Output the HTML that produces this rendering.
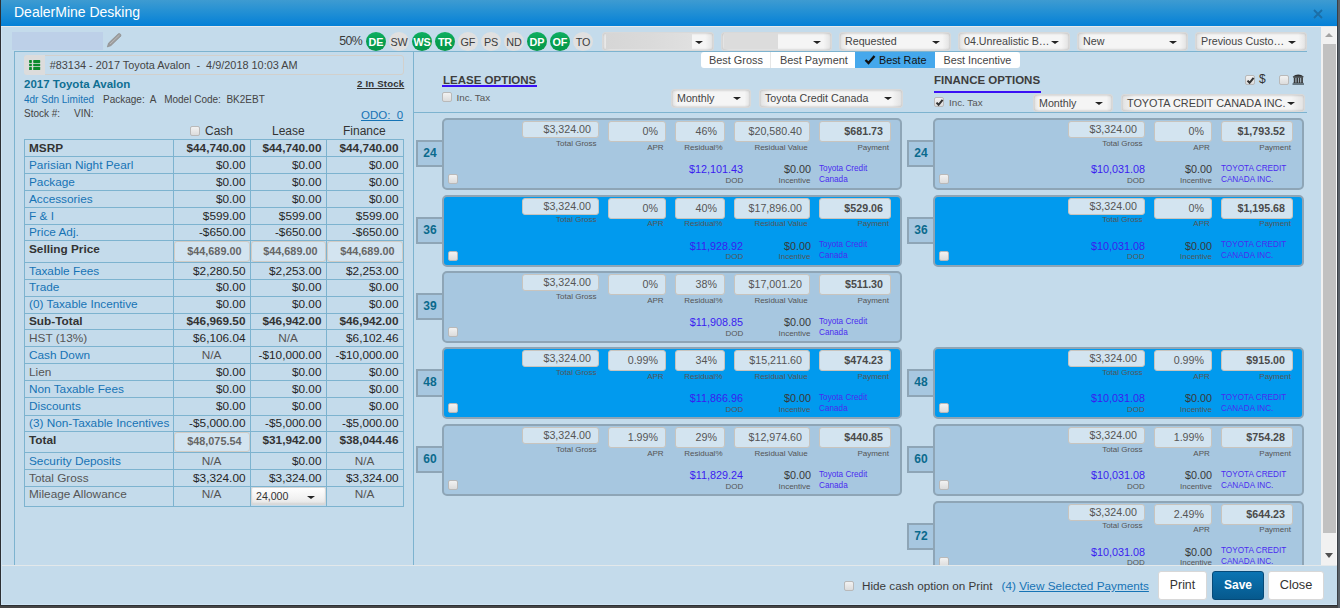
<!DOCTYPE html><html><head><meta charset="utf-8"><style>
*{box-sizing:border-box;margin:0;padding:0}
html,body{width:1340px;height:608px;overflow:hidden}
body{position:relative;background:#464646;font-family:"Liberation Sans",sans-serif;color:#333}
.a{position:absolute;white-space:pre}
.win{position:absolute;left:1px;top:0;width:1336px;height:605px;background:#c4dbeb;overflow:hidden}
.hdr{position:absolute;left:1px;top:0;width:1336px;height:26px;background:linear-gradient(#3e9bd1,#2390d4 45%,#0480d7)}
.hline{position:absolute;left:1px;top:26px;width:1336px;height:1px;background:#e6e9eb}
.ln{position:absolute;background:#7db3cf}
.circ{position:absolute;top:32px;width:20px;height:19px;border-radius:50%;font-size:10.8px;text-align:center;line-height:20.3px;letter-spacing:-0.2px;text-indent:-0.2px}
.cg{background:linear-gradient(#0fb063,#07a050 45%,#06984a);color:#fff;font-weight:bold}
.cy{background:#e0e0e0;color:#3c3c3c}
.sel{position:absolute;height:18.5px;border:1px solid #d9d9d9;border-radius:3px;background:linear-gradient(90deg,#e2e2e2,#f5f5f5 7%,#f5f5f5 93%,#e2e2e2);box-shadow:inset 0 1px 2px rgba(0,0,0,0.12),inset 0 -1px 2px rgba(0,0,0,0.1);font-size:10.7px;color:#444;line-height:16px;padding-left:5px;overflow:hidden}
.car{position:absolute;width:0;height:0;border-left:4px solid transparent;border-right:4px solid transparent;border-top:3.5px solid #222}
.cb{position:absolute;width:10px;height:10px;border:1px solid #b9b9b9;border-radius:2px;background:linear-gradient(#f2f2f2,#dcdcdc)}
.card{position:absolute;border:2px solid #8ea5b6;border-radius:5px;background:#a7c7e0;height:72px}
.card.on{background:#019aee}
.term{position:absolute;border:2px solid #8ea5b6;background:#a7c7e0;color:#0b6a8d;font-weight:bold;font-size:12px;text-align:center;line-height:23.4px}
.inp{position:absolute;background:#d3e4f0;border:1px solid #c8c4be;border-radius:3px;color:#555;font-size:10.7px;text-align:right;padding-right:7px}
.lbl{position:absolute;font-size:8px;color:#555;text-align:right;white-space:pre}
.dod{position:absolute;font-size:10.8px;color:#3a1cf0;text-align:right;white-space:pre}
.inc{position:absolute;font-size:10.8px;color:#383838;text-align:right;white-space:pre}
.lend{position:absolute;font-size:8.2px;color:#4a2cf0;white-space:pre;line-height:11px}
.tc{position:absolute;font-size:11.8px;white-space:pre}
.lk{color:#1673b5}
</style></head><body>
<div class="a" style="left:0;top:0;width:1px;height:606px;background:#2c2f33"></div><div class="a" style="left:0;top:605px;width:1338px;height:1px;background:#2d3033"></div><div class="a" style="left:1337px;top:0;width:1px;height:606px;background:#3a3f45"></div><div class="a" style="left:1338px;top:0;width:2px;height:608px;background:#5a6169"></div>
<div class="win"></div>
<div class="hdr"></div><div class="hline"></div>
<div class="a" style="left:14px;top:3px;font-size:14px;color:#fff;line-height:18px">DealerMine Desking</div>
<svg class="a" style="left:1312.2px;top:7.6px" width="12" height="12"><path d="M2 2L10 10M10 2L2 10" stroke="#1c6ea6" stroke-width="1.8"/></svg>
<div class="a" style="left:12px;top:32px;width:91px;height:18px;background:#bdd0e8"></div>
<svg class="a" style="left:104px;top:32px" width="18" height="18"><path d="M3.3 15 L4.5 11.1 L14.3 1.7 Q15.9 1.2 16.7 2.4 Q17.2 3.5 16.7 4.3 L6.9 13.7 Z" fill="#9c9c9c" stroke="#8a8a8a" stroke-width="0.6"/><path d="M6 12 L15.5 3" stroke="#bdbdbd" stroke-width="0.9"/></svg>
<div class="ln" style="left:14px;top:51px;width:1293px;height:1px"></div>
<div class="ln" style="left:14px;top:51px;width:1px;height:514px"></div>
<div class="ln" style="left:413px;top:51px;width:1px;height:514px"></div>
<div class="ln" style="left:414px;top:112px;width:893px;height:1px"></div>
<div class="a" style="left:339.3px;top:33.7px;font-size:12.3px;letter-spacing:-0.6px;color:#3a3a3a;line-height:14px">50%</div>
<div class="circ cg" style="left:366px">DE</div>
<div class="circ cy" style="left:389px">SW</div>
<div class="circ cg" style="left:412px">WS</div>
<div class="circ cg" style="left:435px">TR</div>
<div class="circ cy" style="left:458px">GF</div>
<div class="circ cy" style="left:481px">PS</div>
<div class="circ cy" style="left:504px">ND</div>
<div class="circ cg" style="left:527px">DP</div>
<div class="circ cg" style="left:550px">OF</div>
<div class="circ cy" style="left:573px">TO</div>
<div class="sel" style="left:602px;top:32px;width:112px"></div>
<div class="car" style="left:695px;top:40.5px"></div>
<div class="sel" style="left:721px;top:32px;width:111px"></div>
<div class="car" style="left:813px;top:40.5px"></div>
<div class="sel" style="left:839px;top:32px;width:112px">Requested</div>
<div class="car" style="left:932px;top:40.5px"></div>
<div class="sel" style="left:958px;top:32px;width:112px">04.Unrealistic B…</div>
<div class="car" style="left:1051px;top:40.5px"></div>
<div class="sel" style="left:1077px;top:32px;width:111px">New</div>
<div class="car" style="left:1169px;top:40.5px"></div>
<div class="sel" style="left:1195px;top:32px;width:112px">Previous Custo…</div>
<div class="car" style="left:1288px;top:40.5px"></div>
<div class="a" style="left:606px;top:33px;width:86px;height:16px;background:linear-gradient(90deg,#d6d6d6,#dadada 50%,#e0e0e0)"></div>
<div class="a" style="left:724px;top:33px;width:54px;height:16px;background:#dcdcdc"></div>
<div class="a" style="left:701px;top:52px;width:319px;height:16px;background:#fff;border-radius:3px"></div>
<div class="a" style="left:770px;top:52px;width:1px;height:16px;background:#e6e6e6"></div>
<div class="a" style="left:855px;top:52px;width:80px;height:16px;background:#45a8ec"></div>
<div class="a" style="left:709px;top:53px;font-size:10.9px;color:#444;line-height:14px">Best Gross</div>
<div class="a" style="left:780px;top:53px;font-size:10.9px;color:#444;line-height:14px">Best Payment</div>
<svg class="a" style="left:864px;top:54px" width="12" height="11"><path d="M1.5 6L4.5 9L10.5 2" stroke="#111" stroke-width="2.4" fill="none"/></svg>
<div class="a" style="left:879px;top:53px;font-size:10.8px;color:#111;line-height:14px">Best Rate</div>
<div class="a" style="left:943.5px;top:53px;font-size:10.8px;color:#444;line-height:14px">Best Incentive</div>
<div class="a" style="left:443px;top:72.7px;font-size:11.5px;font-weight:bold;color:#3d3d3d;letter-spacing:0px;line-height:14px">LEASE OPTIONS</div>
<div class="a" style="left:442px;top:85.3px;width:95px;height:1.4px;background:#3a10f5"></div>
<div class="cb" style="left:442px;top:92px"></div>
<div class="a" style="left:456.5px;top:92.3px;font-size:9.8px;color:#555;line-height:11px">Inc. Tax</div>
<div class="sel" style="left:671px;top:89px;width:80px">Monthly</div><div class="car" style="left:733px;top:97px"></div>
<div class="sel" style="left:759px;top:89px;width:144px;font-size:10.7px">Toyota Credit Canada</div><div class="car" style="left:884px;top:97px"></div>
<div class="a" style="left:934px;top:72.5px;font-size:11.5px;font-weight:bold;color:#3d3d3d;letter-spacing:0px;line-height:14px">FINANCE OPTIONS</div>
<div class="a" style="left:934px;top:91.3px;width:107px;height:1.4px;background:#3a10f5"></div>
<div class="cb" style="left:934px;top:97px"></div>
<svg class="a" style="left:935px;top:98px" width="9" height="9"><path d="M1.5 4.6L3.6 6.8L7.6 1.8" stroke="#333" stroke-width="2" fill="none"/></svg>
<div class="a" style="left:949px;top:97.3px;font-size:9.8px;color:#555;line-height:11px">Inc. Tax</div>
<div class="sel" style="left:1033px;top:93.5px;width:80px">Monthly</div><div class="car" style="left:1095px;top:101.5px"></div>
<div class="sel" style="left:1121px;top:93.5px;width:184px;font-size:10.85px">TOYOTA CREDIT CANADA INC.</div><div class="car" style="left:1287px;top:101.5px"></div>
<div class="cb" style="left:1245px;top:75px"></div>
<svg class="a" style="left:1246px;top:76px" width="9" height="9"><path d="M1.5 4.6L3.6 6.8L7.6 1.8" stroke="#333" stroke-width="2" fill="none"/></svg>
<div class="a" style="left:1259px;top:72px;font-size:12px;color:#333;line-height:14px">$</div>
<div class="cb" style="left:1279px;top:75px"></div>
<svg class="a" style="left:1292px;top:73px" width="13" height="13"><path d="M0.5 3.8 Q6.2 -0.6 12 3.8 Z" fill="#2f2f2f"/><rect x="1.2" y="3.6" width="10" height="1.1" fill="#333"/><rect x="1.8" y="4.6" width="1.7" height="5.4" fill="#3a3a3a"/><rect x="4.4" y="4.6" width="1.6" height="5.4" fill="#3a3a3a"/><rect x="6.7" y="4.6" width="1.6" height="5.4" fill="#3a3a3a"/><rect x="9.2" y="4.6" width="1.7" height="5.4" fill="#3a3a3a"/><rect x="1.2" y="9.6" width="10" height="0.8" fill="#333"/><rect x="0.5" y="10.2" width="11.5" height="1.7" fill="#5c6b75"/></svg>
<div class="card" style="left:442px;top:118px;width:460px"></div>
<div class="term" style="left:416px;top:140px;width:28px;height:27.4px">24</div>
<div class="cb" style="left:448px;top:174px"></div>
<div class="inp" style="left:522px;top:121px;width:77px;height:17px;line-height:15px;">$3,324.00</div>
<div class="lbl" style="right:743.5px;top:138.6px;line-height:9px">Total Gross</div>
<div class="inp" style="left:608px;top:121px;width:58px;height:21px;line-height:19px;">0%</div>
<div class="lbl" style="right:676.4px;top:142.6px;line-height:9px">APR</div>
<div class="inp" style="left:675px;top:121px;width:50px;height:21px;line-height:19px;">46%</div>
<div class="lbl" style="right:617.5px;top:142.6px;line-height:9px">Residual%</div>
<div class="inp" style="left:734px;top:121px;width:76px;height:21px;line-height:19px;">$20,580.40</div>
<div class="lbl" style="right:532.4px;top:142.6px;line-height:9px">Residual Value</div>
<div class="inp" style="left:819px;top:121px;width:72px;height:21px;line-height:19px;font-weight:bold;color:#4a4a4a;">$681.73</div>
<div class="lbl" style="right:451px;top:142.6px;line-height:9px">Payment</div>
<div class="dod" style="right:597px;top:163px;line-height:12px">$12,101.43</div>
<div class="lbl" style="right:596.8px;top:175.6px;line-height:9px">DOD</div>
<div class="inc" style="right:529px;top:163px;line-height:12px">$0.00</div>
<div class="lbl" style="right:529.5px;top:175.6px;line-height:9px">Incentive</div>
<div class="lend" style="left:819px;top:162.6px">Toyota Credit<br>Canada</div>
<div class="card on" style="left:442px;top:194.5px;width:460px"></div>
<div class="term" style="left:416px;top:216.5px;width:28px;height:27.4px">36</div>
<div class="cb" style="left:448px;top:250.5px"></div>
<div class="inp" style="left:522px;top:197.5px;width:77px;height:17px;line-height:15px;">$3,324.00</div>
<div class="lbl" style="right:743.5px;top:215.1px;line-height:9px">Total Gross</div>
<div class="inp" style="left:608px;top:197.5px;width:58px;height:21px;line-height:19px;">0%</div>
<div class="lbl" style="right:676.4px;top:219.1px;line-height:9px">APR</div>
<div class="inp" style="left:675px;top:197.5px;width:50px;height:21px;line-height:19px;">40%</div>
<div class="lbl" style="right:617.5px;top:219.1px;line-height:9px">Residual%</div>
<div class="inp" style="left:734px;top:197.5px;width:76px;height:21px;line-height:19px;">$17,896.00</div>
<div class="lbl" style="right:532.4px;top:219.1px;line-height:9px">Residual Value</div>
<div class="inp" style="left:819px;top:197.5px;width:72px;height:21px;line-height:19px;font-weight:bold;color:#4a4a4a;">$529.06</div>
<div class="lbl" style="right:451px;top:219.1px;line-height:9px">Payment</div>
<div class="dod" style="right:597px;top:239.5px;line-height:12px">$11,928.92</div>
<div class="lbl" style="right:596.8px;top:252.1px;line-height:9px">DOD</div>
<div class="inc" style="right:529px;top:239.5px;line-height:12px">$0.00</div>
<div class="lbl" style="right:529.5px;top:252.1px;line-height:9px">Incentive</div>
<div class="lend" style="left:819px;top:239.1px">Toyota Credit<br>Canada</div>
<div class="card" style="left:442px;top:271px;width:460px"></div>
<div class="term" style="left:416px;top:293px;width:28px;height:27.4px">39</div>
<div class="cb" style="left:448px;top:327px"></div>
<div class="inp" style="left:522px;top:274px;width:77px;height:17px;line-height:15px;">$3,324.00</div>
<div class="lbl" style="right:743.5px;top:291.6px;line-height:9px">Total Gross</div>
<div class="inp" style="left:608px;top:274px;width:58px;height:21px;line-height:19px;">0%</div>
<div class="lbl" style="right:676.4px;top:295.6px;line-height:9px">APR</div>
<div class="inp" style="left:675px;top:274px;width:50px;height:21px;line-height:19px;">38%</div>
<div class="lbl" style="right:617.5px;top:295.6px;line-height:9px">Residual%</div>
<div class="inp" style="left:734px;top:274px;width:76px;height:21px;line-height:19px;">$17,001.20</div>
<div class="lbl" style="right:532.4px;top:295.6px;line-height:9px">Residual Value</div>
<div class="inp" style="left:819px;top:274px;width:72px;height:21px;line-height:19px;font-weight:bold;color:#4a4a4a;">$511.30</div>
<div class="lbl" style="right:451px;top:295.6px;line-height:9px">Payment</div>
<div class="dod" style="right:597px;top:316px;line-height:12px">$11,908.85</div>
<div class="lbl" style="right:596.8px;top:328.6px;line-height:9px">DOD</div>
<div class="inc" style="right:529px;top:316px;line-height:12px">$0.00</div>
<div class="lbl" style="right:529.5px;top:328.6px;line-height:9px">Incentive</div>
<div class="lend" style="left:819px;top:315.6px">Toyota Credit<br>Canada</div>
<div class="card on" style="left:442px;top:347.4px;width:460px"></div>
<div class="term" style="left:416px;top:369.4px;width:28px;height:27.4px">48</div>
<div class="cb" style="left:448px;top:403.4px"></div>
<div class="inp" style="left:522px;top:350.4px;width:77px;height:17px;line-height:15px;">$3,324.00</div>
<div class="lbl" style="right:743.5px;top:368.0px;line-height:9px">Total Gross</div>
<div class="inp" style="left:608px;top:350.4px;width:58px;height:21px;line-height:19px;">0.99%</div>
<div class="lbl" style="right:676.4px;top:372.0px;line-height:9px">APR</div>
<div class="inp" style="left:675px;top:350.4px;width:50px;height:21px;line-height:19px;">34%</div>
<div class="lbl" style="right:617.5px;top:372.0px;line-height:9px">Residual%</div>
<div class="inp" style="left:734px;top:350.4px;width:76px;height:21px;line-height:19px;">$15,211.60</div>
<div class="lbl" style="right:532.4px;top:372.0px;line-height:9px">Residual Value</div>
<div class="inp" style="left:819px;top:350.4px;width:72px;height:21px;line-height:19px;font-weight:bold;color:#4a4a4a;">$474.23</div>
<div class="lbl" style="right:451px;top:372.0px;line-height:9px">Payment</div>
<div class="dod" style="right:597px;top:392.4px;line-height:12px">$11,866.96</div>
<div class="lbl" style="right:596.8px;top:405.0px;line-height:9px">DOD</div>
<div class="inc" style="right:529px;top:392.4px;line-height:12px">$0.00</div>
<div class="lbl" style="right:529.5px;top:405.0px;line-height:9px">Incentive</div>
<div class="lend" style="left:819px;top:392.0px">Toyota Credit<br>Canada</div>
<div class="card" style="left:442px;top:424px;width:460px"></div>
<div class="term" style="left:416px;top:446px;width:28px;height:27.4px">60</div>
<div class="cb" style="left:448px;top:480px"></div>
<div class="inp" style="left:522px;top:427px;width:77px;height:17px;line-height:15px;">$3,324.00</div>
<div class="lbl" style="right:743.5px;top:444.6px;line-height:9px">Total Gross</div>
<div class="inp" style="left:608px;top:427px;width:58px;height:21px;line-height:19px;">1.99%</div>
<div class="lbl" style="right:676.4px;top:448.6px;line-height:9px">APR</div>
<div class="inp" style="left:675px;top:427px;width:50px;height:21px;line-height:19px;">29%</div>
<div class="lbl" style="right:617.5px;top:448.6px;line-height:9px">Residual%</div>
<div class="inp" style="left:734px;top:427px;width:76px;height:21px;line-height:19px;">$12,974.60</div>
<div class="lbl" style="right:532.4px;top:448.6px;line-height:9px">Residual Value</div>
<div class="inp" style="left:819px;top:427px;width:72px;height:21px;line-height:19px;font-weight:bold;color:#4a4a4a;">$440.85</div>
<div class="lbl" style="right:451px;top:448.6px;line-height:9px">Payment</div>
<div class="dod" style="right:597px;top:469px;line-height:12px">$11,829.24</div>
<div class="lbl" style="right:596.8px;top:481.6px;line-height:9px">DOD</div>
<div class="inc" style="right:529px;top:469px;line-height:12px">$0.00</div>
<div class="lbl" style="right:529.5px;top:481.6px;line-height:9px">Incentive</div>
<div class="lend" style="left:819px;top:468.6px">Toyota Credit<br>Canada</div>
<div class="card" style="left:933px;top:118px;width:371px"></div>
<div class="term" style="left:907px;top:140px;width:28px;height:27.4px">24</div>
<div class="cb" style="left:939px;top:174px"></div>
<div class="inp" style="left:1068px;top:121px;width:77px;height:17px;line-height:15px;">$3,324.00</div>
<div class="lbl" style="right:197.4000000000001px;top:138.6px;line-height:9px">Total Gross</div>
<div class="inp" style="left:1154px;top:121px;width:58px;height:21px;line-height:19px;">0%</div>
<div class="lbl" style="right:130.20000000000005px;top:142.6px;line-height:9px">APR</div>
<div class="inp" style="left:1221px;top:121px;width:72px;height:21px;line-height:19px;font-weight:bold;color:#4a4a4a;">$1,793.52</div>
<div class="lbl" style="right:49.09999999999991px;top:142.6px;line-height:9px">Payment</div>
<div class="dod" style="right:195px;top:163px;line-height:12px">$10,031.08</div>
<div class="lbl" style="right:195.20000000000005px;top:175.6px;line-height:9px">DOD</div>
<div class="inc" style="right:128px;top:163px;line-height:12px">$0.00</div>
<div class="lbl" style="right:128px;top:175.6px;line-height:9px">Incentive</div>
<div class="lend" style="left:1221px;top:162.6px">TOYOTA CREDIT<br>CANADA INC.</div>
<div class="card on" style="left:933px;top:194.5px;width:371px"></div>
<div class="term" style="left:907px;top:216.5px;width:28px;height:27.4px">36</div>
<div class="cb" style="left:939px;top:250.5px"></div>
<div class="inp" style="left:1068px;top:197.5px;width:77px;height:17px;line-height:15px;">$3,324.00</div>
<div class="lbl" style="right:197.4000000000001px;top:215.1px;line-height:9px">Total Gross</div>
<div class="inp" style="left:1154px;top:197.5px;width:58px;height:21px;line-height:19px;">0%</div>
<div class="lbl" style="right:130.20000000000005px;top:219.1px;line-height:9px">APR</div>
<div class="inp" style="left:1221px;top:197.5px;width:72px;height:21px;line-height:19px;font-weight:bold;color:#4a4a4a;">$1,195.68</div>
<div class="lbl" style="right:49.09999999999991px;top:219.1px;line-height:9px">Payment</div>
<div class="dod" style="right:195px;top:239.5px;line-height:12px">$10,031.08</div>
<div class="lbl" style="right:195.20000000000005px;top:252.1px;line-height:9px">DOD</div>
<div class="inc" style="right:128px;top:239.5px;line-height:12px">$0.00</div>
<div class="lbl" style="right:128px;top:252.1px;line-height:9px">Incentive</div>
<div class="lend" style="left:1221px;top:239.1px">TOYOTA CREDIT<br>CANADA INC.</div>
<div class="card on" style="left:933px;top:347.4px;width:371px"></div>
<div class="term" style="left:907px;top:369.4px;width:28px;height:27.4px">48</div>
<div class="cb" style="left:939px;top:403.4px"></div>
<div class="inp" style="left:1068px;top:350.4px;width:77px;height:17px;line-height:15px;">$3,324.00</div>
<div class="lbl" style="right:197.4000000000001px;top:368.0px;line-height:9px">Total Gross</div>
<div class="inp" style="left:1154px;top:350.4px;width:58px;height:21px;line-height:19px;">0.99%</div>
<div class="lbl" style="right:130.20000000000005px;top:372.0px;line-height:9px">APR</div>
<div class="inp" style="left:1221px;top:350.4px;width:72px;height:21px;line-height:19px;font-weight:bold;color:#4a4a4a;">$915.00</div>
<div class="lbl" style="right:49.09999999999991px;top:372.0px;line-height:9px">Payment</div>
<div class="dod" style="right:195px;top:392.4px;line-height:12px">$10,031.08</div>
<div class="lbl" style="right:195.20000000000005px;top:405.0px;line-height:9px">DOD</div>
<div class="inc" style="right:128px;top:392.4px;line-height:12px">$0.00</div>
<div class="lbl" style="right:128px;top:405.0px;line-height:9px">Incentive</div>
<div class="lend" style="left:1221px;top:392.0px">TOYOTA CREDIT<br>CANADA INC.</div>
<div class="card" style="left:933px;top:424px;width:371px"></div>
<div class="term" style="left:907px;top:446px;width:28px;height:27.4px">60</div>
<div class="cb" style="left:939px;top:480px"></div>
<div class="inp" style="left:1068px;top:427px;width:77px;height:17px;line-height:15px;">$3,324.00</div>
<div class="lbl" style="right:197.4000000000001px;top:444.6px;line-height:9px">Total Gross</div>
<div class="inp" style="left:1154px;top:427px;width:58px;height:21px;line-height:19px;">1.99%</div>
<div class="lbl" style="right:130.20000000000005px;top:448.6px;line-height:9px">APR</div>
<div class="inp" style="left:1221px;top:427px;width:72px;height:21px;line-height:19px;font-weight:bold;color:#4a4a4a;">$754.28</div>
<div class="lbl" style="right:49.09999999999991px;top:448.6px;line-height:9px">Payment</div>
<div class="dod" style="right:195px;top:469px;line-height:12px">$10,031.08</div>
<div class="lbl" style="right:195.20000000000005px;top:481.6px;line-height:9px">DOD</div>
<div class="inc" style="right:128px;top:469px;line-height:12px">$0.00</div>
<div class="lbl" style="right:128px;top:481.6px;line-height:9px">Incentive</div>
<div class="lend" style="left:1221px;top:468.6px">TOYOTA CREDIT<br>CANADA INC.</div>
<div class="card" style="left:933px;top:500.5px;width:371px"></div>
<div class="term" style="left:907px;top:522.5px;width:28px;height:27.4px">72</div>
<div class="cb" style="left:939px;top:556.5px"></div>
<div class="inp" style="left:1068px;top:503.5px;width:77px;height:17px;line-height:15px;">$3,324.00</div>
<div class="lbl" style="right:197.4000000000001px;top:521.1px;line-height:9px">Total Gross</div>
<div class="inp" style="left:1154px;top:503.5px;width:58px;height:21px;line-height:19px;">2.49%</div>
<div class="lbl" style="right:130.20000000000005px;top:525.1px;line-height:9px">APR</div>
<div class="inp" style="left:1221px;top:503.5px;width:72px;height:21px;line-height:19px;font-weight:bold;color:#4a4a4a;">$644.23</div>
<div class="lbl" style="right:49.09999999999991px;top:525.1px;line-height:9px">Payment</div>
<div class="dod" style="right:195px;top:545.5px;line-height:12px">$10,031.08</div>
<div class="lbl" style="right:195.20000000000005px;top:558.1px;line-height:9px">DOD</div>
<div class="inc" style="right:128px;top:545.5px;line-height:12px">$0.00</div>
<div class="lbl" style="right:128px;top:558.1px;line-height:9px">Incentive</div>
<div class="lend" style="left:1221px;top:545.1px">TOYOTA CREDIT<br>CANADA INC.</div>
<div class="a" style="left:24px;top:55px;width:380px;height:20px;background:#c6dcec;border:1px solid #d2d0cc;border-radius:3px"></div>
<div class="a" style="left:24px;top:55px;width:21px;height:20px;background:#dcdcdc;border-radius:3px 0 0 3px"></div>
<svg class="a" style="left:29px;top:60px" width="12" height="11"><g fill="#0b8a2c"><rect x="0.1" y="0.1" width="2.8" height="2.8" rx="0.6"/><rect x="4.2" y="0.1" width="7" height="2.8" rx="0.6"/><rect x="0.1" y="3.8" width="2.8" height="2.4" rx="0.6"/><rect x="4.2" y="3.8" width="7" height="2.4" rx="0.6"/><rect x="0.1" y="7" width="2.8" height="3" rx="0.6"/><rect x="4.2" y="7" width="7" height="3" rx="0.6"/></g></svg>
<div class="a" style="left:49.7px;top:58px;font-size:10.9px;color:#444;line-height:14px">#83134 - 2017 Toyota Avalon  -  4/9/2018 10:03 AM</div>
<div class="a" style="left:24px;top:77px;font-size:11.5px;font-weight:bold;color:#0f6f93;line-height:14px">2017 Toyota Avalon</div>
<div class="a" style="left:357px;top:78.3px;font-size:9.6px;font-weight:bold;color:#333;line-height:12px;letter-spacing:0.2px;text-decoration:underline;text-underline-offset:1px">2 In Stock</div>
<div class="a" style="left:24px;top:93.5px;font-size:10px;color:#1673b5;line-height:11px">4dr Sdn Limited</div>
<div class="a" style="left:103px;top:93.5px;font-size:10px;color:#444;line-height:11px">Package:  A   Model Code:  BK2EBT</div>
<div class="a" style="left:24px;top:107.5px;font-size:10px;color:#444;line-height:11px">Stock #:     VIN:</div>
<div class="a" style="left:361px;top:108px;font-size:11.5px;color:#1673b5;line-height:14px;text-decoration:underline">ODO:  0</div>
<div class="cb" style="left:190px;top:126px"></div>
<div class="a" style="left:205px;top:124px;font-size:12px;color:#333;line-height:14px">Cash</div>
<div class="a" style="left:272px;top:124px;font-size:12px;color:#333;line-height:14px">Lease</div>
<div class="a" style="left:343px;top:124px;font-size:12px;color:#333;line-height:14px">Finance</div>
<div class="ln" style="left:24px;top:139px;width:380px;height:1px"></div>
<div class="ln" style="left:24px;top:156px;width:380px;height:1px"></div>
<div class="ln" style="left:24px;top:173px;width:380px;height:1px"></div>
<div class="ln" style="left:24px;top:190px;width:380px;height:1px"></div>
<div class="ln" style="left:24px;top:207px;width:380px;height:1px"></div>
<div class="ln" style="left:24px;top:224px;width:380px;height:1px"></div>
<div class="ln" style="left:24px;top:240px;width:380px;height:1px"></div>
<div class="ln" style="left:24px;top:262px;width:380px;height:1px"></div>
<div class="ln" style="left:24px;top:279px;width:380px;height:1px"></div>
<div class="ln" style="left:24px;top:295.7px;width:380px;height:1px"></div>
<div class="ln" style="left:24px;top:312.5px;width:380px;height:1px"></div>
<div class="ln" style="left:24px;top:329.4px;width:380px;height:1px"></div>
<div class="ln" style="left:24px;top:346.4px;width:380px;height:1px"></div>
<div class="ln" style="left:24px;top:363.3px;width:380px;height:1px"></div>
<div class="ln" style="left:24px;top:380.4px;width:380px;height:1px"></div>
<div class="ln" style="left:24px;top:397.4px;width:380px;height:1px"></div>
<div class="ln" style="left:24px;top:414.5px;width:380px;height:1px"></div>
<div class="ln" style="left:24px;top:431px;width:380px;height:1px"></div>
<div class="ln" style="left:24px;top:452.4px;width:380px;height:1px"></div>
<div class="ln" style="left:24px;top:469px;width:380px;height:1px"></div>
<div class="ln" style="left:24px;top:486.3px;width:380px;height:1px"></div>
<div class="ln" style="left:24px;top:505.5px;width:380px;height:1px"></div>
<div class="ln" style="left:24px;top:139px;width:1px;height:367.5px"></div>
<div class="ln" style="left:173px;top:139px;width:1px;height:367.5px"></div>
<div class="ln" style="left:250px;top:139px;width:1px;height:367.5px"></div>
<div class="ln" style="left:326px;top:139px;width:1px;height:367.5px"></div>
<div class="ln" style="left:403px;top:139px;width:1px;height:367.5px"></div>
<div class="tc" style="left:29px;top:140.5px;line-height:14px;font-weight:bold;color:#333;">MSRP</div>
<div class="tc" style="right:1094.5px;top:140.5px;line-height:14px;font-weight:bold;color:#333;">$44,740.00</div>
<div class="tc" style="right:1018.5px;top:140.5px;line-height:14px;font-weight:bold;color:#333;">$44,740.00</div>
<div class="tc" style="right:941.5px;top:140.5px;line-height:14px;font-weight:bold;color:#333;">$44,740.00</div>
<div class="tc" style="left:29px;top:157.5px;line-height:14px;color:#1673b5;">Parisian Night Pearl</div>
<div class="tc" style="right:1094.5px;top:157.5px;line-height:14px;color:#262626;">$0.00</div>
<div class="tc" style="right:1018.5px;top:157.5px;line-height:14px;color:#262626;">$0.00</div>
<div class="tc" style="right:941.5px;top:157.5px;line-height:14px;color:#262626;">$0.00</div>
<div class="tc" style="left:29px;top:174.5px;line-height:14px;color:#1673b5;">Package</div>
<div class="tc" style="right:1094.5px;top:174.5px;line-height:14px;color:#262626;">$0.00</div>
<div class="tc" style="right:1018.5px;top:174.5px;line-height:14px;color:#262626;">$0.00</div>
<div class="tc" style="right:941.5px;top:174.5px;line-height:14px;color:#262626;">$0.00</div>
<div class="tc" style="left:29px;top:191.5px;line-height:14px;color:#1673b5;">Accessories</div>
<div class="tc" style="right:1094.5px;top:191.5px;line-height:14px;color:#262626;">$0.00</div>
<div class="tc" style="right:1018.5px;top:191.5px;line-height:14px;color:#262626;">$0.00</div>
<div class="tc" style="right:941.5px;top:191.5px;line-height:14px;color:#262626;">$0.00</div>
<div class="tc" style="left:29px;top:208.5px;line-height:14px;color:#1673b5;">F & I</div>
<div class="tc" style="right:1094.5px;top:208.5px;line-height:14px;color:#262626;">$599.00</div>
<div class="tc" style="right:1018.5px;top:208.5px;line-height:14px;color:#262626;">$599.00</div>
<div class="tc" style="right:941.5px;top:208.5px;line-height:14px;color:#262626;">$599.00</div>
<div class="tc" style="left:29px;top:225.0px;line-height:14px;color:#1673b5;">Price Adj.</div>
<div class="tc" style="right:1094.5px;top:225.0px;line-height:14px;color:#262626;">-$650.00</div>
<div class="tc" style="right:1018.5px;top:225.0px;line-height:14px;color:#262626;">-$650.00</div>
<div class="tc" style="right:941.5px;top:225.0px;line-height:14px;color:#262626;">-$650.00</div>
<div class="tc" style="left:29px;top:241.7px;line-height:14px;font-weight:bold;color:#333;">Selling Price</div>
<div class="a" style="left:174px;top:241px;width:76px;height:21px;background:#d3e4f0;border:1px solid #d0cbc5;border-radius:3px;font-size:10.85px;font-weight:bold;color:#666;text-align:right;padding-right:7.5px;line-height:18px">$44,689.00</div>
<div class="a" style="left:251px;top:241px;width:75px;height:21px;background:#d3e4f0;border:1px solid #d0cbc5;border-radius:3px;font-size:10.85px;font-weight:bold;color:#666;text-align:right;padding-right:7.5px;line-height:18px">$44,689.00</div>
<div class="a" style="left:327px;top:241px;width:76px;height:21px;background:#d3e4f0;border:1px solid #d0cbc5;border-radius:3px;font-size:10.85px;font-weight:bold;color:#666;text-align:right;padding-right:7.5px;line-height:18px">$44,689.00</div>
<div class="tc" style="left:29px;top:263.5px;line-height:14px;color:#1673b5;">Taxable Fees</div>
<div class="tc" style="right:1094.5px;top:263.5px;line-height:14px;color:#262626;">$2,280.50</div>
<div class="tc" style="right:1018.5px;top:263.5px;line-height:14px;color:#262626;">$2,253.00</div>
<div class="tc" style="right:941.5px;top:263.5px;line-height:14px;color:#262626;">$2,253.00</div>
<div class="tc" style="left:29px;top:280.35px;line-height:14px;color:#1673b5;">Trade</div>
<div class="tc" style="right:1094.5px;top:280.35px;line-height:14px;color:#262626;">$0.00</div>
<div class="tc" style="right:1018.5px;top:280.35px;line-height:14px;color:#262626;">$0.00</div>
<div class="tc" style="right:941.5px;top:280.35px;line-height:14px;color:#262626;">$0.00</div>
<div class="tc" style="left:29px;top:297.1px;line-height:14px;color:#1673b5;">(0) Taxable Incentive</div>
<div class="tc" style="right:1094.5px;top:297.1px;line-height:14px;color:#262626;">$0.00</div>
<div class="tc" style="right:1018.5px;top:297.1px;line-height:14px;color:#262626;">$0.00</div>
<div class="tc" style="right:941.5px;top:297.1px;line-height:14px;color:#262626;">$0.00</div>
<div class="tc" style="left:29px;top:313.95px;line-height:14px;font-weight:bold;color:#333;">Sub-Total</div>
<div class="tc" style="right:1094.5px;top:313.95px;line-height:14px;font-weight:bold;color:#333;">$46,969.50</div>
<div class="tc" style="right:1018.5px;top:313.95px;line-height:14px;font-weight:bold;color:#333;">$46,942.00</div>
<div class="tc" style="right:941.5px;top:313.95px;line-height:14px;font-weight:bold;color:#333;">$46,942.00</div>
<div class="tc" style="left:29px;top:330.9px;line-height:14px;color:#555;">HST (13%)</div>
<div class="tc" style="right:1094.5px;top:330.9px;line-height:14px;color:#262626;">$6,106.04</div>
<div class="tc" style="left:250px;width:76px;text-align:center;top:330.9px;line-height:14px;color:#555">N/A</div>
<div class="tc" style="right:941.5px;top:330.9px;line-height:14px;color:#262626;">$6,102.46</div>
<div class="tc" style="left:29px;top:347.85px;line-height:14px;color:#1673b5;">Cash Down</div>
<div class="tc" style="left:173px;width:77px;text-align:center;top:347.85px;line-height:14px;color:#555">N/A</div>
<div class="tc" style="right:1018.5px;top:347.85px;line-height:14px;color:#262626;">-$10,000.00</div>
<div class="tc" style="right:941.5px;top:347.85px;line-height:14px;color:#262626;">-$10,000.00</div>
<div class="tc" style="left:29px;top:364.85px;line-height:14px;color:#555;">Lien</div>
<div class="tc" style="right:1094.5px;top:364.85px;line-height:14px;color:#262626;">$0.00</div>
<div class="tc" style="right:1018.5px;top:364.85px;line-height:14px;color:#262626;">$0.00</div>
<div class="tc" style="right:941.5px;top:364.85px;line-height:14px;color:#262626;">$0.00</div>
<div class="tc" style="left:29px;top:381.9px;line-height:14px;color:#1673b5;">Non Taxable Fees</div>
<div class="tc" style="right:1094.5px;top:381.9px;line-height:14px;color:#262626;">$0.00</div>
<div class="tc" style="right:1018.5px;top:381.9px;line-height:14px;color:#262626;">$0.00</div>
<div class="tc" style="right:941.5px;top:381.9px;line-height:14px;color:#262626;">$0.00</div>
<div class="tc" style="left:29px;top:398.95px;line-height:14px;color:#1673b5;">Discounts</div>
<div class="tc" style="right:1094.5px;top:398.95px;line-height:14px;color:#262626;">$0.00</div>
<div class="tc" style="right:1018.5px;top:398.95px;line-height:14px;color:#262626;">$0.00</div>
<div class="tc" style="right:941.5px;top:398.95px;line-height:14px;color:#262626;">$0.00</div>
<div class="tc" style="left:29px;top:415.75px;line-height:14px;color:#1673b5;">(3) Non-Taxable Incentives</div>
<div class="tc" style="right:1094.5px;top:415.75px;line-height:14px;color:#262626;">-$5,000.00</div>
<div class="tc" style="right:1018.5px;top:415.75px;line-height:14px;color:#262626;">-$5,000.00</div>
<div class="tc" style="right:941.5px;top:415.75px;line-height:14px;color:#262626;">-$5,000.00</div>
<div class="tc" style="left:29px;top:432.7px;line-height:14px;font-weight:bold;color:#333;">Total</div>
<div class="a" style="left:174px;top:432px;width:76px;height:20.399999999999977px;background:#d3e4f0;border:1px solid #d0cbc5;border-radius:3px;font-size:10.85px;font-weight:bold;color:#666;text-align:right;padding-right:7.5px;line-height:17.399999999999977px">$48,075.54</div>
<div class="tc" style="right:1018.5px;top:432.7px;line-height:14px;font-weight:bold;color:#333;">$31,942.00</div>
<div class="tc" style="right:941.5px;top:432.7px;line-height:14px;font-weight:bold;color:#333;">$38,044.46</div>
<div class="tc" style="left:29px;top:453.7px;line-height:14px;color:#1673b5;">Security Deposits</div>
<div class="tc" style="left:173px;width:77px;text-align:center;top:453.7px;line-height:14px;color:#555">N/A</div>
<div class="tc" style="right:1018.5px;top:453.7px;line-height:14px;color:#262626;">$0.00</div>
<div class="tc" style="left:326px;width:77px;text-align:center;top:453.7px;line-height:14px;color:#555">N/A</div>
<div class="tc" style="left:29px;top:470.65px;line-height:14px;color:#555;">Total Gross</div>
<div class="tc" style="right:1094.5px;top:470.65px;line-height:14px;color:#262626;">$3,324.00</div>
<div class="tc" style="right:1018.5px;top:470.65px;line-height:14px;color:#262626;">$3,324.00</div>
<div class="tc" style="right:941.5px;top:470.65px;line-height:14px;color:#262626;">$3,324.00</div>
<div class="tc" style="left:29px;top:487.3px;line-height:14px;color:#555;">Mileage Allowance</div>
<div class="tc" style="left:173px;width:77px;text-align:center;top:487.3px;line-height:14px;color:#555">N/A</div>
<div class="a" style="left:251px;top:487.3px;width:75px;height:18.19999999999999px;background:linear-gradient(#fefefe,#f2f2f2 60%,#e6e6e6);border:1px solid #d8d8d8;border-radius:2px;box-shadow:inset 0 -1px 2px rgba(0,0,0,0.08);font-size:10.6px;color:#333;padding-left:4px;line-height:16.69999999999999px">24,000</div>
<div class="car" style="left:307px;top:496.3px"></div>
<div class="tc" style="left:326px;width:77px;text-align:center;top:487.3px;line-height:14px;color:#555">N/A</div>
<div class="a" style="left:1321px;top:27px;width:16px;height:538px;background:#f1f1f1"></div><div class="a" style="left:1336px;top:27px;width:1px;height:538px;background:#fafafa"></div>
<div class="a" style="left:1323px;top:44px;width:13px;height:489px;background:#c1c1c1"></div>
<div class="a" style="left:1325px;top:33px;width:0;height:0;border-left:4px solid transparent;border-right:4px solid transparent;border-bottom:4px solid #a3a3a3"></div>
<div class="a" style="left:1325px;top:553px;width:0;height:0;border-left:4px solid transparent;border-right:4px solid transparent;border-top:5px solid #505050"></div>
<div class="a" style="left:1px;top:565px;width:1336px;height:40px;background:#c4dbeb;border-top:1px solid #e3e8ea;border-bottom:1px solid #cfe5f5"></div>
<div class="a" style="left:1px;top:27px;width:1px;height:578px;background:#cde3f3"></div>
<div class="cb" style="left:844px;top:581px"></div>
<div class="a" style="left:862px;top:579px;font-size:11.7px;color:#3a3a3a;line-height:14px">Hide cash option on Print</div>
<div class="a" style="left:1001.5px;top:579px;font-size:11.75px;color:#1673b5;line-height:14px">(4) <u>View Selected Payments</u></div>
<div class="a" style="left:1158px;top:571px;width:49px;height:29px;background:#fff;border:1px solid #d8d8d8;border-radius:3px;font-size:12.3px;color:#333;text-align:center;line-height:27px">Print</div>
<div class="a" style="left:1212px;top:571px;width:52px;height:29px;background:linear-gradient(#0b74b3,#06598d);border:1px solid #064a78;border-radius:3px;font-size:12px;font-weight:bold;color:#fff;text-align:center;line-height:27px">Save</div>
<div class="a" style="left:1268px;top:571px;width:56px;height:29px;background:#fff;border:1px solid #d8d8d8;border-radius:3px;font-size:12.8px;color:#333;text-align:center;line-height:25.8px">Close</div>
</body></html>
